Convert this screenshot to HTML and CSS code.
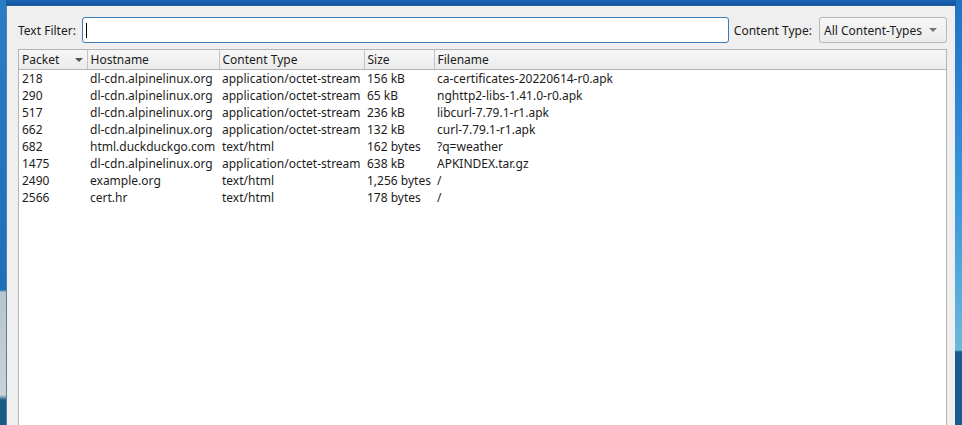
FILE: index.html
```html
<!DOCTYPE html>
<html>
<head>
<meta charset="utf-8">
<link rel="stylesheet" href="styles.css">
</head>
<body>
<div class="desktop">
  <div class="window">
    <div class="titlebar"></div>
    <div class="content">
      <div class="filter-row">
        <label class="lbl">Text Filter:</label>
        <div class="input"><span class="caret"></span></div>
        <label class="lbl lbl2">Content Type:</label>
        <div class="combo"><span>All Content-Types</span><span class="arrow"></span></div>
      </div>
      <div class="tablebox">
        <table class="objs">
          <colgroup>
            <col class="c1"><col class="c2"><col class="c3"><col class="c4"><col>
          </colgroup>
          <thead>
            <tr><th><span>Packet</span><span class="sort"></span></th><th>Hostname</th><th>Content Type</th><th>Size</th><th class="last">Filename</th></tr>
          </thead>
          <tbody>
            <tr><td>218</td><td>dl-cdn.alpinelinux.org</td><td>application/octet-stream</td><td>156 kB</td><td>ca-certificates-20220614-r0.apk</td></tr>
            <tr><td>290</td><td>dl-cdn.alpinelinux.org</td><td>application/octet-stream</td><td>65 kB</td><td>nghttp2-libs-1.41.0-r0.apk</td></tr>
            <tr><td>517</td><td>dl-cdn.alpinelinux.org</td><td>application/octet-stream</td><td>236 kB</td><td>libcurl-7.79.1-r1.apk</td></tr>
            <tr><td>662</td><td>dl-cdn.alpinelinux.org</td><td>application/octet-stream</td><td>132 kB</td><td>curl-7.79.1-r1.apk</td></tr>
            <tr><td>682</td><td>html.duckduckgo.com</td><td>text/html</td><td>162 bytes</td><td>?q=weather</td></tr>
            <tr><td>1475</td><td>dl-cdn.alpinelinux.org</td><td>application/octet-stream</td><td>638 kB</td><td>APKINDEX.tar.gz</td></tr>
            <tr><td>2490</td><td>example.org</td><td>text/html</td><td>1,256 bytes</td><td>/</td></tr>
            <tr><td>2566</td><td>cert.hr</td><td>text/html</td><td>178 bytes</td><td>/</td></tr>
          </tbody>
        </table>
      </div>
    </div>
  </div>
</div>
</body>
</html>
```

FILE: styles.css
```css
html, body {
  margin: 0;
  padding: 0;
  width: 962px;
  height: 425px;
  overflow: hidden;
}
body {
  font-family: "Noto Sans", "DejaVu Sans", sans-serif;
  font-size: 12px;
  color: #1c1c1c;
}
.desktop {
  width: 962px;
  height: 425px;
  padding: 0 7px 0 6px;
  box-sizing: border-box;
  background:
    linear-gradient(to bottom, #2a7cc4 0px, #1f6fb8 290px, #b8c4cc 292px, #c8d2d8 395px, #1a5a82 400px, #1a5a82 425px) left / 6px 100% no-repeat,
    linear-gradient(to bottom, #1f73c4 0px, #3a98dc 200px, #6ab8dc 350px, #1a5a8c 352px, #1a5a8c 425px) right / 7px 100% no-repeat,
    #1a63ae;
}
.window {
  height: 100%;
  background: #efefef;
  border-left: 1px solid #5a7fa0;
  box-sizing: border-box;
  display: flex;
  flex-direction: column;
}
.titlebar {
  height: 5px;
  background: linear-gradient(to bottom, #1b64b3, #0f55a4);
  margin-left: -1px;
  margin-right: -1px;
  border-bottom: 1px solid #2a5d94;
}
.content {
  padding: 11px 8px 0 11px;
  flex: 1;
  display: flex;
  flex-direction: column;
}
.filter-row {
  display: flex;
  align-items: center;
  height: 26px;
}
.lbl {
  margin-right: 6px;
  white-space: nowrap;
}
.lbl2 {
  margin-left: 5px;
  margin-right: 7px;
}
.input {
  flex: 1;
  height: 24px;
  border: 1px solid #3d7bb6;
  border-radius: 3px;
  background: #fff;
  box-sizing: content-box;
  display: flex;
  align-items: center;
  padding-left: 3px;
}
.caret {
  display: block;
  width: 1px;
  height: 15px;
  background: #000;
}
.combo {
  width: 128px;
  height: 26px;
  border: 1px solid #b8b8b8;
  border-radius: 3px;
  background: linear-gradient(to bottom, #f6f6f6, #ececec);
  display: flex;
  align-items: center;
  justify-content: space-between;
  padding: 0 9px 0 4px;
  box-sizing: border-box;
}
.arrow {
  width: 0;
  height: 0;
  border-left: 4px solid transparent;
  border-right: 4px solid transparent;
  border-top: 4px solid #777;
}
.tablebox {
  margin-top: 6px;
  flex: 1;
  background: #fff;
  border: 1px solid #b4b4b4;
  border-bottom: none;
}
.objs {
  border-collapse: collapse;
  table-layout: fixed;
  width: 100%;
}
.c1 { width: 68px; }
.c2 { width: 132px; }
.c3 { width: 145px; }
.c4 { width: 70px; }
.objs th {
  height: 19px;
  padding: 0 0 0 3px;
  text-align: left;
  font-weight: normal;
  background: linear-gradient(to bottom, #f7f7f7, #ebebeb);
  border-right: 1px solid #c4c4c4;
  border-bottom: 1px solid #b4b4b4;
  box-sizing: border-box;
  white-space: nowrap;
  position: relative;
}
.objs th.last { border-right: none; }
.sort {
  position: absolute;
  right: 4px;
  top: 8px;
  width: 0;
  height: 0;
  border-left: 4px solid transparent;
  border-right: 4px solid transparent;
  border-top: 4px solid #555;
}
.objs td {
  height: 17px;
  padding: 0 0 0 3px;
  white-space: nowrap;
  overflow: hidden;
  line-height: 17px;
}
```
